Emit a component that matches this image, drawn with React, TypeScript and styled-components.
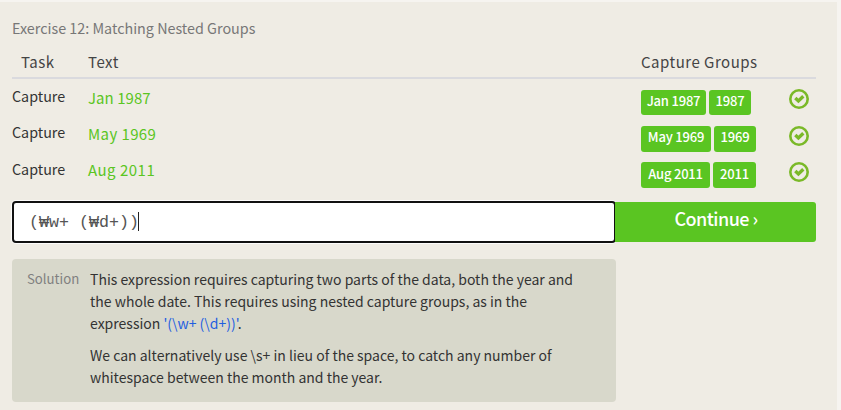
import React from 'react';
import styled, { createGlobalStyle } from 'styled-components';

const sans = '"Noto Sans CJK KR", "Open Sans", sans-serif';

const GlobalStyle = createGlobalStyle`
  * { box-sizing: border-box; }
  body { margin: 0; background: #f6f4f0; font-family: ${sans}; color: #333; }
`;

const Page = styled.main`
  width: 841px;
  height: 410px;
  padding: 2px 4px 0 0;
  overflow: hidden;
`;

const Panel = styled.section`
  height: 408px;
  padding: 15px 21px 0 12px;
  background: #efece4;
`;

const Title = styled.h2`
  margin: 0 0 1px;
  font-size: 14.35px;
  font-weight: 400;
  line-height: 22px;
  color: #777;
`;

const columns = 'grid-template-columns: 76px 553px 147px 28px;';

const HeaderRow = styled.div`
  display: grid;
  ${columns}
  height: 39px;
  padding-top: 11px;
  border-bottom: 2px solid #dadade;
  font-size: 15px;
  line-height: 22px;
  color: #444;
`;

const HeaderCell = styled.span<{ $indent?: number; $tracking?: number }>`
  padding-left: ${p => p.$indent ?? 0}px;
  letter-spacing: ${p => p.$tracking ?? 0}px;
`;

const Rows = styled.div`
  display: grid;
  grid-template-rows: repeat(3, 36px);
  padding-top: 8px;
  height: 122px;
`;

const Row = styled.div`
  display: grid;
  ${columns}
  align-items: start;
`;

const Task = styled.span<{ $drop: number }>`
  margin-top: ${p => p.$drop - 2}px;
  font-size: 14.3px;
  line-height: 22px;
`;

const Sample = styled.span<{ $tracking: number }>`
  margin-top: -1px;
  font-size: 15px;
  letter-spacing: ${p => p.$tracking}px;
  line-height: 24px;
  color: #5ac522;
`;

const Groups = styled.div`
  display: flex;
  gap: 3px;
  margin-top: 3px;
`;

const Pill = styled.span<{ $width: number; $height: number; $line: number }>`
  width: ${p => p.$width}px;
  height: ${p => p.$height}px;
  border-radius: 3px;
  background: #5ac522;
  color: #fff;
  font-size: 13px;
  font-weight: 500;
  letter-spacing: -0.2px;
  line-height: ${p => p.$line}px;
  text-align: center;
  white-space: nowrap;
`;

const CheckIcon = styled.svg<{ $drop: number }>`
  display: block;
  width: 22px;
  height: 22px;
  margin-top: ${p => 1 + p.$drop}px;
`;

const Form = styled.div`
  display: flex;
  width: 804px;
  height: 42px;
`;

const Field = styled.div`
  display: flex;
  align-items: center;
  width: 604px;
  height: 42px;
  padding: 1px 0 0 15px;
  border: 2px solid #111;
  border-radius: 4px;
  background: #fff;
  box-shadow: 0 0 0 1px rgba(255, 255, 255, 0.8);
  font: 16.67px "Liberation Mono", monospace;
  color: #555;
  white-space: pre;
`;

const Caret = styled.span`
  width: 1px;
  height: 19px;
  margin: 0 0 2px -1px;
  background: #222;
`;

const Continue = styled.button`
  width: 201px;
  height: 40px;
  margin: 1px 0 0 -1px;
  padding: 0 0 7px 1px;
  border: 0;
  border-radius: 0 3px 3px 0;
  background: #5ac522;
  color: #fff;
  font: 500 18px/33px ${sans};
  letter-spacing: -0.55px;
`;

const Solution = styled.aside`
  display: grid;
  grid-template-columns: 62px 1fr;
  width: 604px;
  height: 143px;
  margin-top: 16px;
  padding: 9px 16px;
  border-radius: 4px;
  background: #d8d8cb;
`;

const SolutionLabel = styled.span`
  margin: 0 0 0 -1px;
  font-size: 13.2px;
  line-height: 21px;
  color: #808080;
`;

const Paragraph = styled.p`
  margin: 0 0 10px;
  font-size: 14px;
  line-height: 22px;
  white-space: nowrap;
`;

const Code = styled.span`
  color: #1f5fe0;
`;

const rows = [
  { text: 'Jan 1987', year: '1987', widths: [65, 42], height: 25, line: 22, tracking: 0.05, taskDrop: 0, iconDrop: 0 },
  { text: 'May 1969', year: '1969', widths: [70, 42], height: 26, line: 22, tracking: 0.4, taskDrop: 0, iconDrop: 1 },
  { text: 'Aug 2011', year: '2011', widths: [69, 43], height: 26, line: 24, tracking: 0.5, taskDrop: 1, iconDrop: 1 },
];

const Check = ({ drop }: { drop: number }) => (
  <CheckIcon $drop={drop} viewBox="0 0 22 22" fill="none" stroke="#7ab928">
    <circle cx="11" cy="11" r="8.7" strokeWidth="2.6" />
    <path d="M7.3 10 10.4 13 15.3 8.2" strokeWidth="3.3" />
  </CheckIcon>
);

export default function App() {
  return (
    <Page>
      <GlobalStyle />
      <Panel>
        <Title>Exercise 12: Matching Nested Groups</Title>
        <HeaderRow>
          <HeaderCell $indent={9} $tracking={0.5}>Task</HeaderCell>
          <HeaderCell $tracking={0.5}>Text</HeaderCell>
          <HeaderCell $tracking={0.5}>Capture Groups</HeaderCell>
        </HeaderRow>
        <Rows>
          {rows.map(r => (
            <Row key={r.text}>
              <Task $drop={r.taskDrop}>Capture</Task>
              <Sample $tracking={r.tracking}>{r.text}</Sample>
              <Groups>
                <Pill $width={r.widths[0]} $height={r.height} $line={r.line}>{r.text}</Pill>
                <Pill $width={r.widths[1]} $height={r.height} $line={r.line}>{r.year}</Pill>
              </Groups>
              <Check drop={r.iconDrop} />
            </Row>
          ))}
        </Rows>
        <Form>
          <Field>(₩w+ (₩d+))<Caret /></Field>
          <Continue>Continue ›</Continue>
        </Form>
        <Solution>
          <SolutionLabel>Solution</SolutionLabel>
          <div>
            <Paragraph>
              This expression requires capturing two parts of the data, both the year and<br />
              the whole date. This requires using nested capture groups, as in the<br />
              expression <Code>'(\w+ (\d+))'</Code>.
            </Paragraph>
            <Paragraph>
              We can alternatively use \s+ in lieu of the space, to catch any number of<br />
              whitespace between the month and the year.
            </Paragraph>
          </div>
        </Solution>
      </Panel>
    </Page>
  );
}
